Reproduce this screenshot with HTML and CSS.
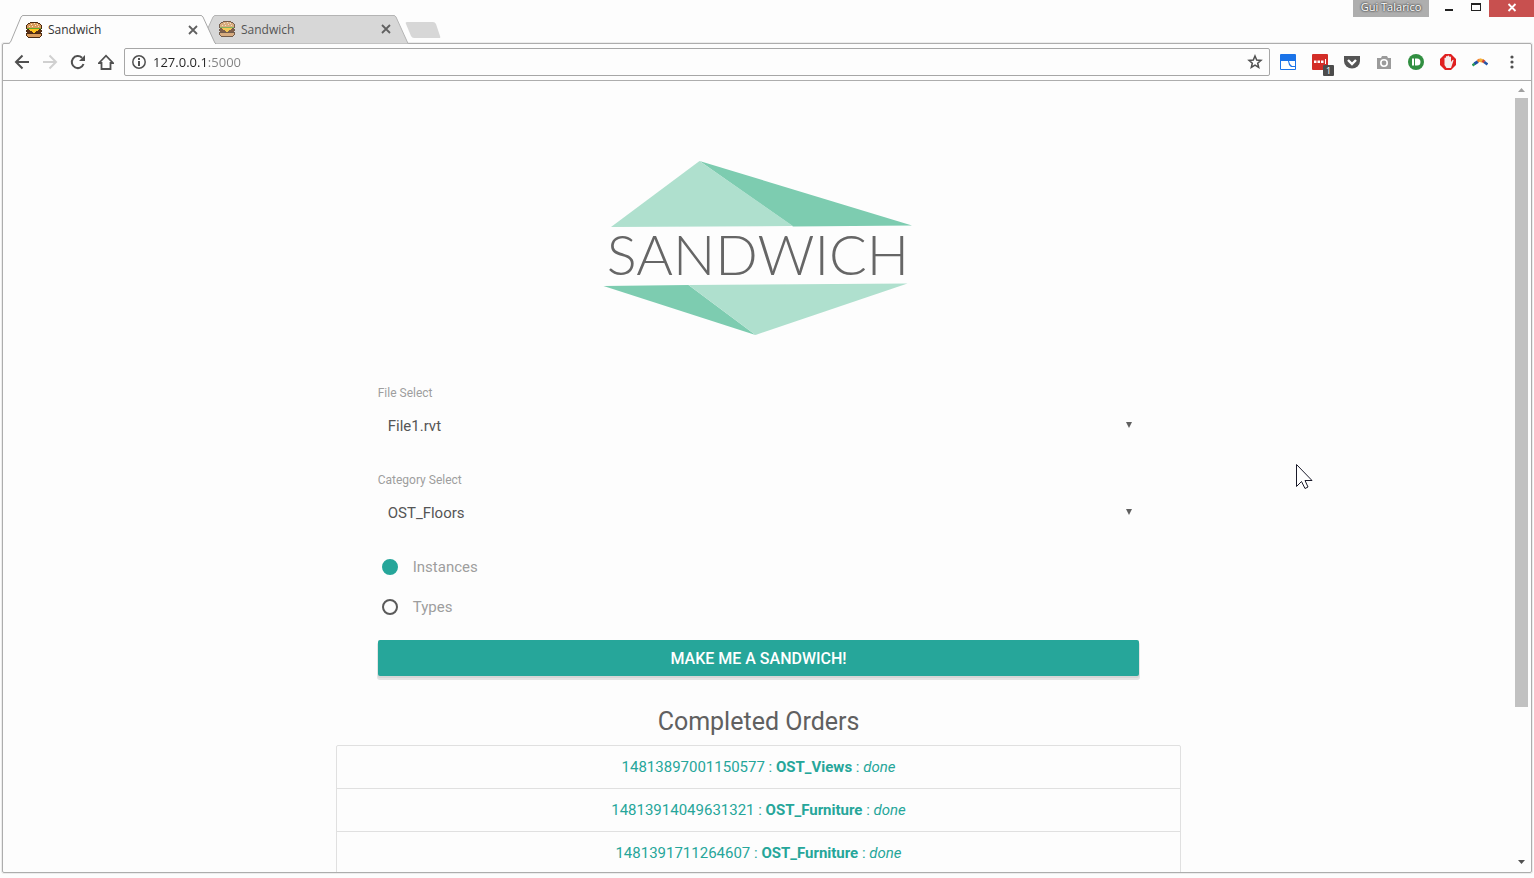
FILE: index.html
```html
<!DOCTYPE html>
<html lang="en">
<head>
<meta charset="utf-8">
<title>Sandwich</title>
<link rel="stylesheet" href="styles.css">
</head>
<body>
<svg class="defs" aria-hidden="true">
  <symbol id="burger" viewBox="0 0 16 16">
    <path fill="#4a2a12" d="M4 0h8v1h2v1h1v1h1v4h-1v1h1v2h-1v1h1v3h-1v1h-1v1H2v-1H1v-1H0v-3h1v-1H0V8h1V7H0V3h1V2h1V1h2z"/>
    <path fill="#d99a5b" d="M4 1h8v1h2v1h1v3H1V3h1V2h2z"/>
    <path fill="#f8e6c4" d="M5 2h1v1H5zM8 1h1v1H8zM11 2h1v1h-1zM3 4h1v1H3zM6 4h1v1H6zM9 3h1v1H9zM12 4h1v1h-1z"/>
    <path fill="#63a52b" d="M1 6h14v1h-2v1H3V7H1z"/>
    <path fill="#d8401f" d="M3 7h3v1H3zM11 7h2v1h-2z"/>
    <path fill="#5b2e12" d="M1 8h14v3H1z"/>
    <path fill="#ffc21c" d="M3 7h10v1h-1v1h-2v1H9v1H7v-1H6V9H4V8H3z"/>
    <path fill="#d99a5b" d="M1 12h14v2h-1v1H2v-1H1z"/>
  </symbol>
  <symbol id="cross" viewBox="0 0 10 10"><path d="M1 1l8 8M9 1L1 9" fill="none" stroke="currentColor" stroke-width="1.800"/></symbol>
</svg>

<header class="titlebar">
  <nav class="tabs">
    <div class="tab tab-active">
      <svg class="tab-shape" viewBox="0 0 208 29" aria-hidden="true"><path d="M0 29L1 28.500Q2 28 3 26L13 2Q14 .5 15 .5H193Q194 .5 195 2L206 26Q207 28.500 208 29" fill="#fdfdfd" stroke="#a8a8a8"/></svg>
      <svg class="favicon"><use href="#burger"/></svg>
      <span class="tab-title">Sandwich</span>
      <button class="tab-close" aria-label="Close tab"><svg><use href="#cross"/></svg></button>
    </div>
    <div class="tab tab-idle">
      <svg class="tab-shape" viewBox="0 0 208 29" aria-hidden="true"><path d="M13 28.500L7 13L12 2Q13 .5 14 .5H193Q194 .5 195 2L207 28.500" fill="#d7d7d7" stroke="#b4b4b4"/></svg>
      <svg class="favicon"><use href="#burger"/></svg>
      <span class="tab-title">Sandwich</span>
      <button class="tab-close" aria-label="Close tab"><svg><use href="#cross"/></svg></button>
    </div>
    <button class="new-tab" aria-label="New tab"><svg viewBox="0 0 36 18"><path d="M2 1h26q2 0 3 2l4 12q1 2-1 2H9q-2 0-3-2L1 3q-1-2 1-2z" fill="#d7d7d7"/></svg></button>
  </nav>
  <div class="window-controls">
    <button class="profile">Gui Talarico</button>
    <button class="win" aria-label="Minimize"><svg viewBox="0 0 12 12"><path d="M2 9h8v2H2z" fill="#222"/></svg></button>
    <button class="win" aria-label="Maximize"><svg viewBox="0 0 12 12"><path d="M1 3h10v8H1zM2 5v5h8V5z" fill="#222" fill-rule="evenodd"/></svg></button>
    <button class="win win-close" aria-label="Close"><svg viewBox="0 0 12 12"><path d="M2.500 4l7 7M9.500 4l-7 7" stroke="#fff" stroke-width="1.800"/></svg></button>
  </div>
</header>

<div class="window">
  <div class="toolbar">
    <button class="tool" aria-label="Back"><svg viewBox="0 0 16 16"><path d="M15 8H2M8.500 1.500L2 8l6.500 6.500" fill="none" stroke="#505050" stroke-width="2"/></svg></button>
    <button class="tool" aria-label="Forward"><svg viewBox="0 0 16 16"><path d="M1 8h13M7.500 1.500L14 8l-6.500 6.500" fill="none" stroke="#d0d0d0" stroke-width="2"/></svg></button>
    <button class="tool" aria-label="Reload"><svg viewBox="0 0 16 16"><path d="M13.500 10A6 6 0 1 1 12 3.800" fill="none" stroke="#505050" stroke-width="2"/><path d="M15 1v6H9z" fill="#505050"/></svg></button>
    <button class="tool" aria-label="Home"><svg viewBox="0 0 16 16"><path d="M1 9L8 1.700 15 9H12.500V15H3.500V9z" fill="none" stroke="#505050" stroke-width="1.800"/></svg></button>
    <div class="omnibox">
      <svg class="info" viewBox="0 0 14 14" aria-hidden="true"><circle cx="7" cy="7" r="6.200" fill="none" stroke="#505050" stroke-width="1.500"/><path d="M6 3h2v2H6zM6 6h2v5H6z" fill="#505050"/></svg>
      <input class="address" type="text" aria-label="Address" value="127.0.0.1:5000">
      <button class="star" aria-label="Bookmark this page"><svg viewBox="0 0 16 16"><path d="M8 2l1.700 4 4.300.4-3.300 2.800 1 4.300L8 11.200 4.300 13.500l1-4.300L2 6.400 6.300 6z" fill="none" stroke="#505050" stroke-width="1.500"/></svg></button>
    </div>
    <div class="extensions">
      <button class="ext" aria-label="Map extension"><svg viewBox="0 0 16 16"><rect width="16" height="16" rx="1" fill="#1a73e8"/><path d="M1 7h7l1 4 2 2h4v2H1zM9 7h6v5h-3l-2-2z" fill="#fff"/></svg></button>
      <button class="ext" aria-label="Password extension"><svg viewBox="0 0 16 16"><rect width="16" height="16" rx="1" fill="#d32d27"/><path d="M2 6.500h2.500v2.500H2zM5.500 6.500H8v2.500H5.500zM9 6.500h2.500v2.500H9zM13 5h1v5h-1z" fill="#fff"/></svg><span class="count">1</span></button>
      <button class="ext" aria-label="Pocket"><svg viewBox="0 0 16 16"><path d="M0 2h16v5a8 7.500 0 0 1-16 0z" fill="#555"/><path d="M4 6l4 4 4-4" fill="none" stroke="#fff" stroke-width="2.400"/></svg></button>
      <button class="ext" aria-label="Screenshot"><svg viewBox="0 0 16 16"><path d="M1 4h4l1-2h5l1 2h3v11H1z" fill="#9b9b9b"/><circle cx="8" cy="9" r="3.200" fill="none" stroke="#fff" stroke-width="1.600"/></svg></button>
      <button class="ext" aria-label="Pushbullet"><svg viewBox="0 0 16 16"><circle cx="8" cy="8" r="8" fill="#318f41"/><path d="M4 4.500h2v7H4zM7 4.500h2a3.500 3.500 0 0 1 0 7H7z" fill="#fff"/></svg></button>
      <button class="ext" aria-label="Ad blocker"><svg viewBox="0 0 16 16"><path d="M5 0h6l5 5v6l-5 5H5l-5-5V5z" fill="#e02020"/><path d="M4.500 4q.8-1.200 1.500 0V2.500q.8-1.200 1.500 0V2q1-1.200 1.800 0v1q1-1 1.700 0v5l1.500-2q1.200-.5 1 .5L11 14H6.500L4.500 11z" fill="#f4eeee"/></svg></button>
      <button class="ext" aria-label="Arc extension"><svg viewBox="0 0 16 16"><path d="M.5 11.500l2.500-2" stroke="#2a9a58" stroke-width="2.600"/><path d="M2.500 9.800L6 7.500" stroke="#1f4fa5" stroke-width="3"/><path d="M5.500 7.300L8 5.800" stroke="#f08030" stroke-width="3"/><path d="M7.500 6l3.500 1" stroke="#f3b236" stroke-width="3.400"/><path d="M10.500 6.500l2 1.500" stroke="#cf3f38" stroke-width="3"/><path d="M12.200 8l3.300 2.500" stroke="#2455a5" stroke-width="2.600"/></svg></button>
      <button class="ext" aria-label="Menu"><svg viewBox="0 0 16 16"><g fill="#505050"><circle cx="8" cy="3" r="1.600"/><circle cx="8" cy="8" r="1.600"/><circle cx="8" cy="13" r="1.600"/></g></svg></button>
    </div>
  </div>

  <div class="viewport">
    <main class="page">
      <svg class="logo" viewBox="601 155 316 184" role="img" aria-label="Sandwich">
        <path d="M699.500 161L912 225.500 793 226.500z" fill="#7dccb0"/>
        <path d="M611 227L699.500 161 793 226z" fill="#afe0ce"/>
        <path d="M603.500 286L688.500 285 755.500 335z" fill="#7dccb0"/>
        <path d="M688.500 285L907.500 283.500 755.500 335z" fill="#afe0ce"/>
        <text class="logo-text" x="758" y="275" text-anchor="middle">SANDWICH</text>
      </svg>
      <form class="order">
        <label class="field-label" for="file">File Select</label>
        <div class="select-wrap">
          <select id="file"><option>File1.rvt</option></select>
          <svg class="caret" viewBox="0 0 6 6"><path d="M0 0h6L3 6z"/></svg>
        </div>
        <label class="field-label" for="category">Category Select</label>
        <div class="select-wrap">
          <select id="category"><option>OST_Floors</option></select>
          <svg class="caret" viewBox="0 0 6 6"><path d="M0 0h6L3 6z"/></svg>
        </div>
        <div class="radios">
          <label class="radio"><input type="radio" name="kind" checked>Instances</label>
          <label class="radio"><input type="radio" name="kind">Types</label>
        </div>
        <button class="submit" type="button">MAKE ME A SANDWICH!</button>
      </form>
      <h1>Completed Orders</h1>
      <div class="orders">
        <a href="#">14813897001150577 : <b>OST_Views</b> : <i>done</i></a>
        <a href="#">14813914049631321 : <b>OST_Furniture</b> : <i>done</i></a>
        <a href="#">1481391711264607 : <b>OST_Furniture</b> : <i>done</i></a>
      </div>
    </main>
    <div class="scrollbar" aria-hidden="true">
      <svg class="arrow" viewBox="0 0 17 17"><path d="M4 11h7L7.500 7z" fill="#a0a0a0"/></svg>
      <div class="track"><div class="thumb"></div></div>
      <svg class="arrow" viewBox="0 0 17 17"><path d="M4 5h7L7.500 9z" fill="#505050"/></svg>
    </div>
  </div>
</div>

<svg class="pointer" viewBox="0 0 17 26" aria-hidden="true"><path d="M.5 .5V22.500L5.500 17.500 9 24.500 12 23 9 16.500H16z" fill="#fff" stroke="#1a1a2a"/></svg>
</body>
</html>
```

FILE: styles.css
```css
* {
  box-sizing: border-box;
}

body {
  margin: 0;
  height: 100vh;
  display: flex;
  flex-direction: column;
  padding: 0 2px 5px;
  background: #fdfdfd;
  font-family: Roboto, sans-serif;
  font-size: 15px;
  overflow: hidden;
}

button {
  border: 0;
  padding: 0;
  background: none;
  display: flex;
  align-items: center;
  justify-content: center;
}

svg {
  display: block;
  flex: none;
}

.defs {
  position: absolute;
  width: 0;
  height: 0;
}

/* Title bar */
.titlebar {
  display: flex;
  justify-content: space-between;
  align-items: flex-start;
  height: 43px;
  margin-right: -2px;
  flex: none;
}

.tabs {
  display: flex;
  align-items: flex-start;
  padding: 15px 0 0 6px;
}

.tab {
  position: relative;
  display: flex;
  align-items: center;
  width: 193px;
  height: 29px;
  padding-left: 18px;
  font: 12px "Open Sans", sans-serif;
  color: #333;
}

.tab-active {
  z-index: 1;
}

.tab-idle {
  height: 28px;
}

.tab-shape {
  position: absolute;
  left: 0;
  top: 0;
  width: 208px;
  height: 29px;
}

.favicon {
  position: relative;
  width: 16px;
  height: 16px;
}

.tab-idle .favicon {
  opacity: .7;
}

.tab-title {
  position: relative;
  flex: 1;
  padding-left: 6px;
}

.tab-idle .tab-title {
  color: #555;
}

.tab-close {
  position: relative;
  margin-right: 3px;
  color: #606060;
}

.tab-close svg {
  width: 10px;
  height: 10px;
}

.new-tab {
  margin-top: 6px;
  padding-left: 11px;
}

.new-tab svg {
  width: 36px;
  height: 18px;
}

.window-controls {
  display: flex;
  height: 17px;
}

.profile {
  width: 76px;
  margin-right: 6px;
  background: #aeaeae;
  color: #fff;
  font: 11px "Open Sans", sans-serif;
  text-shadow: 0 0 2px #333, 0 0 2px #333;
  line-height: 14px;
  align-items: flex-start;
}

.win {
  width: 27px;
  align-items: flex-start;
}

.win svg {
  width: 12px;
  height: 12px;
}

.win-close {
  width: 45px;
  background: #c8504f;
}

/* Window frame and toolbar */
.window {
  flex: 1;
  min-height: 0;
  display: flex;
  flex-direction: column;
  border: 1px solid #adadad;
  border-radius: 2px;
  box-shadow: 0 0 0 1px #ececec;
}

.toolbar {
  display: flex;
  align-items: center;
  flex: none;
  height: 37px;
  padding: 0 3px 0 5px;
  border-bottom: 1px solid #adadad;
}

.tool {
  width: 28px;
  height: 28px;
}

.tool svg,
.star svg,
.ext svg {
  width: 16px;
  height: 16px;
}

.omnibox {
  flex: 1;
  display: flex;
  align-items: center;
  height: 28px;
  margin: 0 2px 0 4px;
  padding: 0 6px 0 7px;
  border: 1px solid #a6a6a6;
  border-radius: 2px;
}

.info {
  width: 14px;
  height: 14px;
}

.address {
  flex: 1;
  min-width: 0;
  height: 24px;
  border: 0;
  padding: 0 0 0 7px;
  outline: 0;
  font: 13px "Open Sans", sans-serif;
  color: transparent;
  /* The host is dark, the port after it is dimmed. */
  background: linear-gradient(90deg, #222 60px, #808080 60px) text;
  -webkit-background-clip: text;
}

.extensions {
  display: flex;
}

.ext {
  position: relative;
  width: 32px;
  height: 32px;
}

.count {
  position: absolute;
  right: 2px;
  bottom: 2px;
  width: 11px;
  height: 11px;
  background: #4c4c4c;
  border-radius: 1px;
  color: #fff;
  font: 9px/11px "Open Sans", sans-serif;
  text-align: center;
}

/* Page */
.viewport {
  flex: 1;
  min-height: 0;
  display: flex;
}

.page {
  flex: 1;
  display: flex;
  flex-direction: column;
  align-items: center;
  padding-top: 74px;
  overflow: hidden;
}

.page > * {
  flex: none;
}

.logo {
  width: 316px;
  height: 184px;
}

.logo-text {
  font: 300 56px Lato, sans-serif;
  fill: #666;
}

.order {
  display: flex;
  flex-direction: column;
  width: 50.4%;
  padding-top: 22px;
}

.field-label {
  margin-top: 23px;
  padding-bottom: 1px;
  font-size: 12px;
  line-height: 18px;
  color: #9e9e9e;
}

.select-wrap {
  position: relative;
}

select {
  appearance: none;
  display: block;
  width: 100%;
  height: 45px;
  padding: 0 10px;
  border: 0;
  background: none;
  font: 15px Roboto, sans-serif;
  color: #555;
}

.caret {
  position: absolute;
  right: 7px;
  top: 19px;
  width: 6px;
  height: 6px;
  fill: #606060;
}

.radios {
  display: flex;
  flex-direction: column;
  margin: 12px 0 13px;
}

.radio {
  display: flex;
  align-items: center;
  gap: 15px;
  height: 40px;
  padding-left: 4px;
  color: #9e9e9e;
}

.radio input {
  appearance: none;
  width: 16px;
  height: 16px;
  margin: 0;
  border: 2px solid #5a5a5a;
  border-radius: 50%;
}

.radio input:checked {
  border-color: #26a69a;
  background: #26a69a;
}

.submit {
  height: 36px;
  border-radius: 2px;
  background: #26a69a;
  box-shadow: 0 2px 0 #d6d6d6, 0 3px 0 1px #e4e4e4;
  color: #fff;
  font: 500 16px Roboto, sans-serif;
}

h1 {
  margin: 28px 0 5px;
  font-size: 25px;
  font-weight: 400;
  line-height: 36px;
  color: #606060;
}

.orders {
  width: 55.9%;
  border: 1px solid #e0e0e0;
  border-radius: 2px;
}

.orders a {
  display: block;
  border-bottom: 1px solid #e0e0e0;
  line-height: 42px;
  text-align: center;
  text-decoration: none;
  color: #26a69a;
}

.scrollbar {
  display: flex;
  flex-direction: column;
  width: 17px;
}

.arrow {
  width: 17px;
  height: 17px;
}

.track {
  flex: 1;
  padding: 0 3px 0 1px;
}

.thumb {
  height: 80.5%;
  background: #c1c1c1;
}

.pointer {
  position: absolute;
  left: 1296px;
  top: 464px;
  width: 17px;
  height: 26px;
}
```
